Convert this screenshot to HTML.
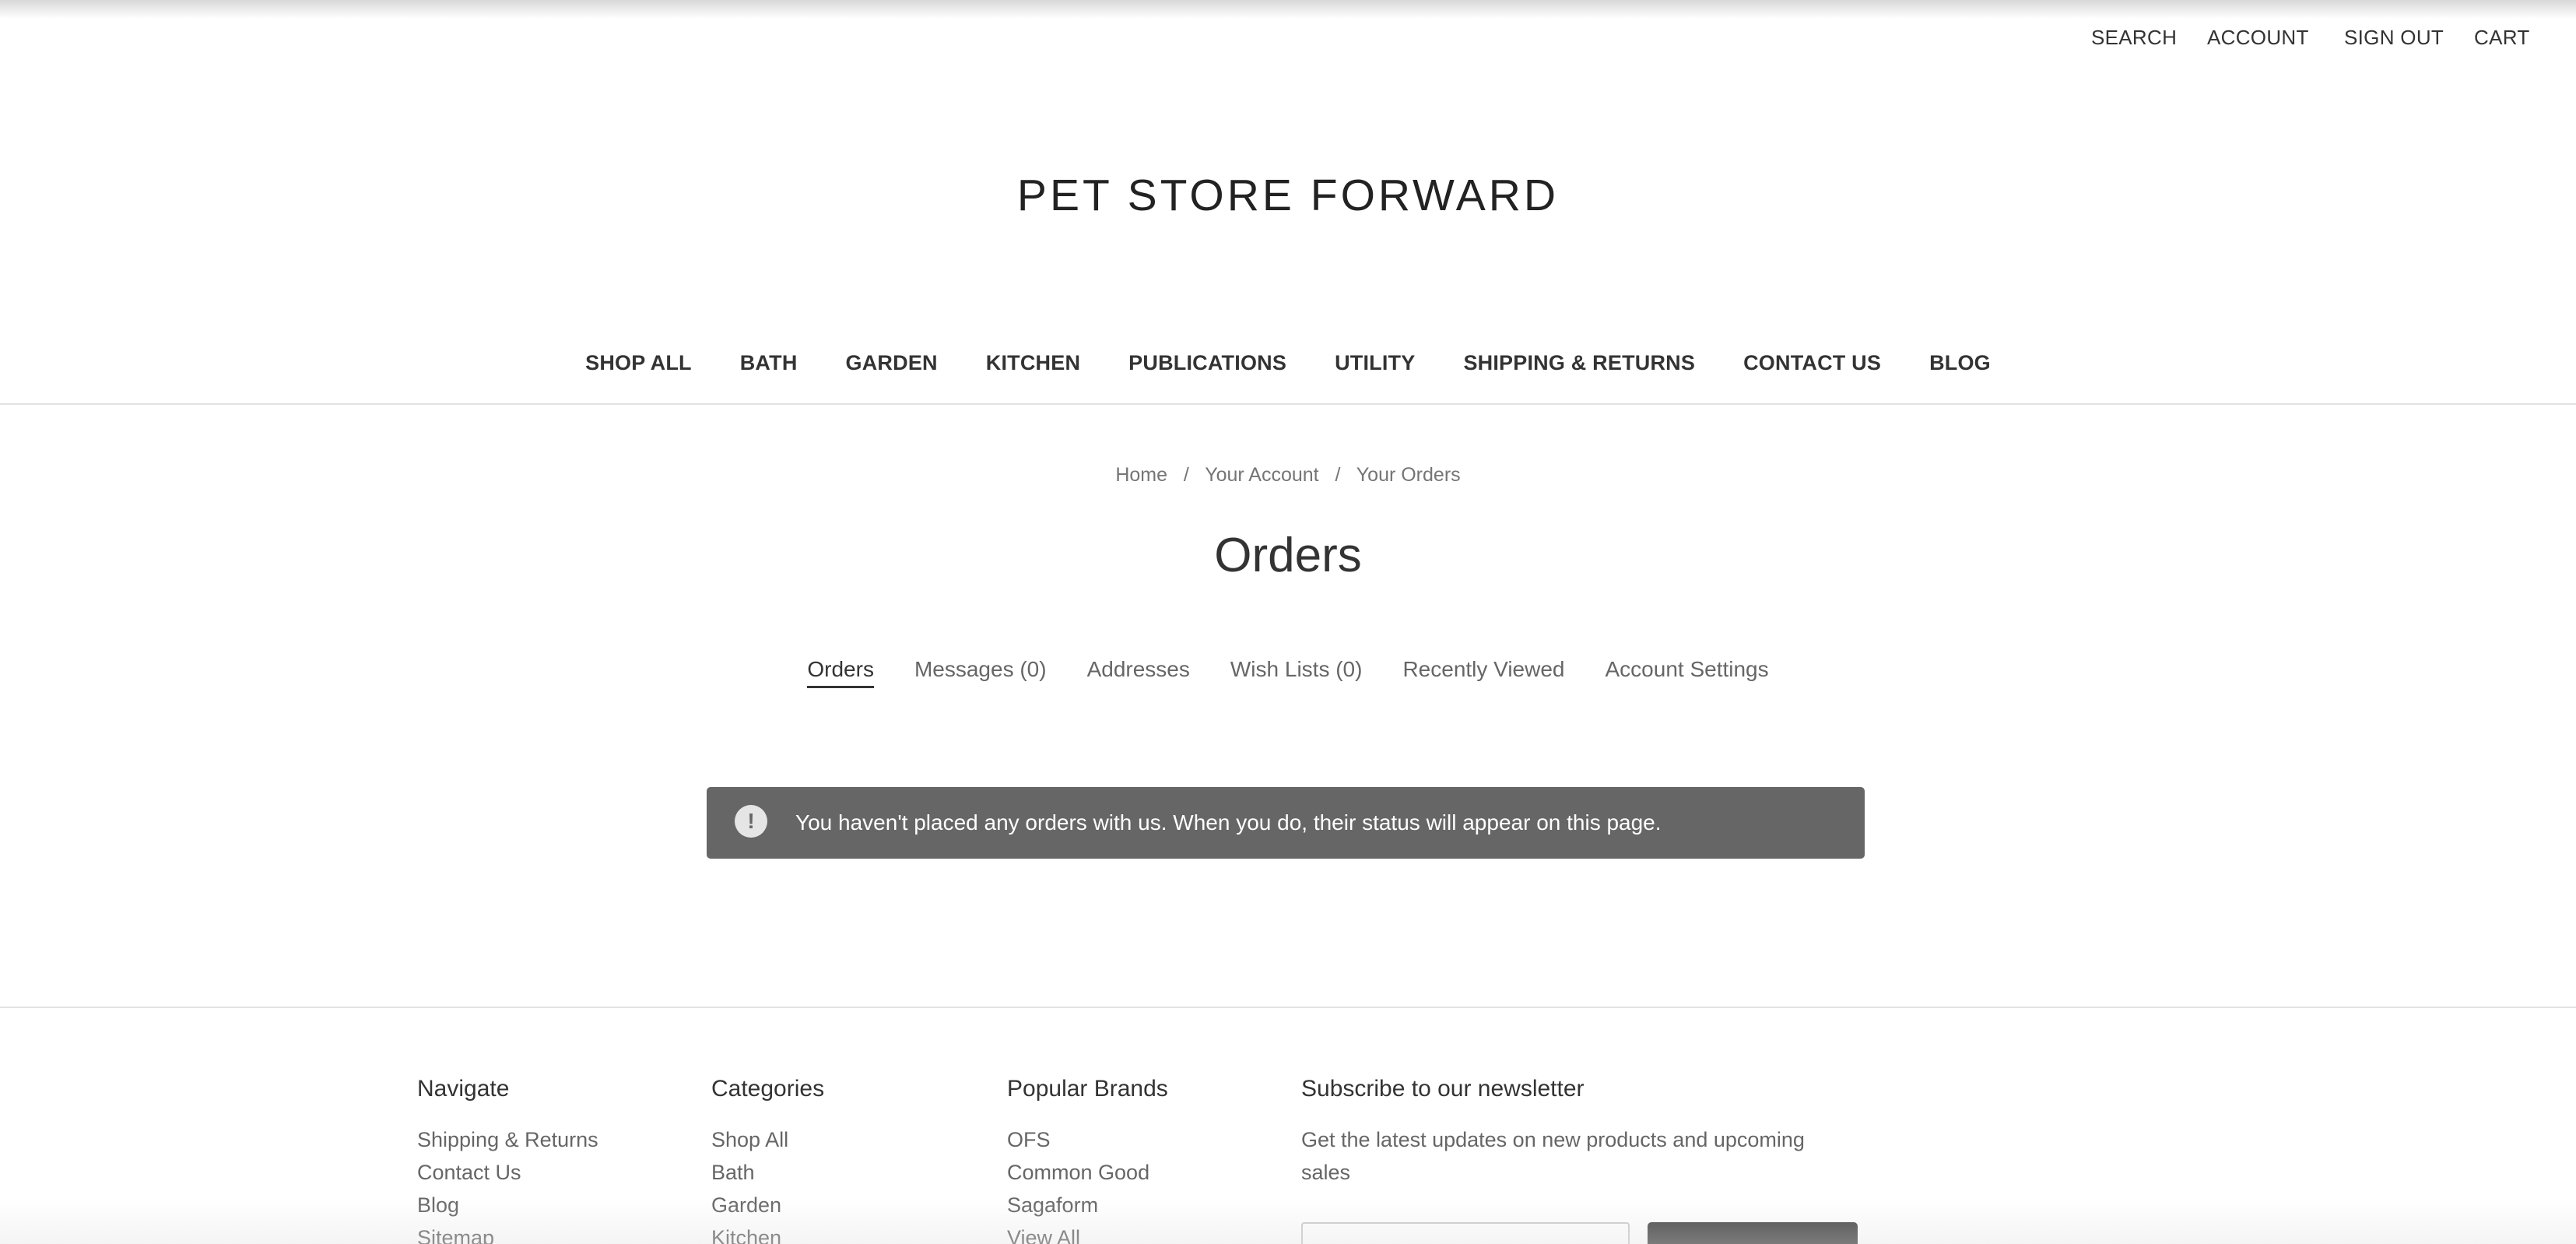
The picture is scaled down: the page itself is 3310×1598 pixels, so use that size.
<!DOCTYPE html>
<html><head><meta charset="utf-8"><style>
*{margin:0;padding:0;box-sizing:border-box}
html,body{width:3310px;height:1598px;overflow:hidden;background:#fff;font-family:"Liberation Sans",sans-serif;color:#333}
body{position:relative}
.abs{position:absolute;white-space:nowrap}
.topshadow{position:absolute;left:0;top:0;width:3310px;height:24px;background:linear-gradient(#d8d8d8,rgba(255,255,255,0))}
.botshadow{position:absolute;left:0;bottom:0;width:3310px;height:60px;background:linear-gradient(rgba(255,255,255,0),rgba(225,225,225,.35))}
.top a{position:absolute;top:33px;font-size:26px;color:#333;letter-spacing:.3px}
.nav{position:absolute;top:451px;left:0;width:3310px;text-align:center;font-size:27px;font-weight:bold;color:#333}
.nav span{margin:0 31px;letter-spacing:.2px}
.tabs{position:absolute;top:844px;left:0;width:3310px;text-align:center;font-size:28px;color:#666}
.tabs span{margin:0 26px}
.fh{position:absolute;top:1382px;font-size:30px;color:#333}
.fl{position:absolute;font-size:27px;color:#666;line-height:42px}
</style></head><body>
<div class="topshadow"></div>
<div class="top">
<a style="left:2687px">SEARCH</a>
<a style="left:2836px">ACCOUNT</a>
<a style="left:3012px">SIGN OUT</a>
<a style="left:3179px">CART</a>
</div>
<div class="abs" style="left:0;width:3310px;text-align:center;top:218px;font-size:57px;letter-spacing:4px;color:#222">PET STORE FORWARD</div>
<div class="nav"><span>SHOP ALL</span><span>BATH</span><span>GARDEN</span><span>KITCHEN</span><span>PUBLICATIONS</span><span>UTILITY</span><span>SHIPPING &amp; RETURNS</span><span>CONTACT US</span><span>BLOG</span></div>
<div style="position:absolute;top:518px;left:0;width:3310px;height:2px;background:#e2e2e2"></div>
<div class="abs" style="left:0;width:3310px;text-align:center;top:596px;font-size:25px;color:#757575">Home &nbsp;&nbsp;/&nbsp;&nbsp; Your Account &nbsp;&nbsp;/&nbsp;&nbsp; Your Orders</div>
<div class="abs" style="left:0;width:3310px;text-align:center;top:678px;font-size:62px;color:#333">Orders</div>
<div class="tabs"><span style="color:#333;border-bottom:3px solid #333;padding-bottom:6px">Orders</span><span>Messages (0)</span><span>Addresses</span><span>Wish Lists (0)</span><span>Recently Viewed</span><span>Account Settings</span></div>
<div style="position:absolute;left:908px;top:1011px;width:1488px;height:92px;background:#666;border-radius:5px"></div>
<div style="position:absolute;left:944px;top:1034px;width:42px;height:42px;border-radius:50%;background:#e5e5e5;color:#666;font-size:28px;font-weight:bold;text-align:center;line-height:42px">!</div>
<div class="abs" style="left:1022px;top:1041px;font-size:28px;color:#fff">You haven't placed any orders with us. When you do, their status will appear on this page.</div>
<div style="position:absolute;top:1293px;left:0;width:3310px;height:2px;background:#e2e2e2"></div>
<div class="fh" style="left:536px">Navigate</div>
<div class="fh" style="left:914px">Categories</div>
<div class="fh" style="left:1294px">Popular Brands</div>
<div class="fh" style="left:1672px">Subscribe to our newsletter</div>
<div class="fl" style="left:536px;top:1443px">Shipping &amp; Returns<br>Contact Us<br>Blog<br>Sitemap</div>
<div class="fl" style="left:914px;top:1443px">Shop All<br>Bath<br>Garden<br>Kitchen</div>
<div class="fl" style="left:1294px;top:1443px">OFS<br>Common Good<br>Sagaform<br>View All</div>
<div class="fl" style="left:1672px;top:1443px;white-space:normal;width:690px">Get the latest updates on new products and upcoming sales</div>
<div style="position:absolute;left:1672px;top:1570px;width:422px;height:28px;border:2px solid #ccc;border-bottom:none;border-radius:4px 4px 0 0;background:#fff"></div>
<div style="position:absolute;left:2117px;top:1570px;width:270px;height:28px;background:#444;border-radius:5px 5px 0 0"></div>
<div class="botshadow"></div>
</body></html>
